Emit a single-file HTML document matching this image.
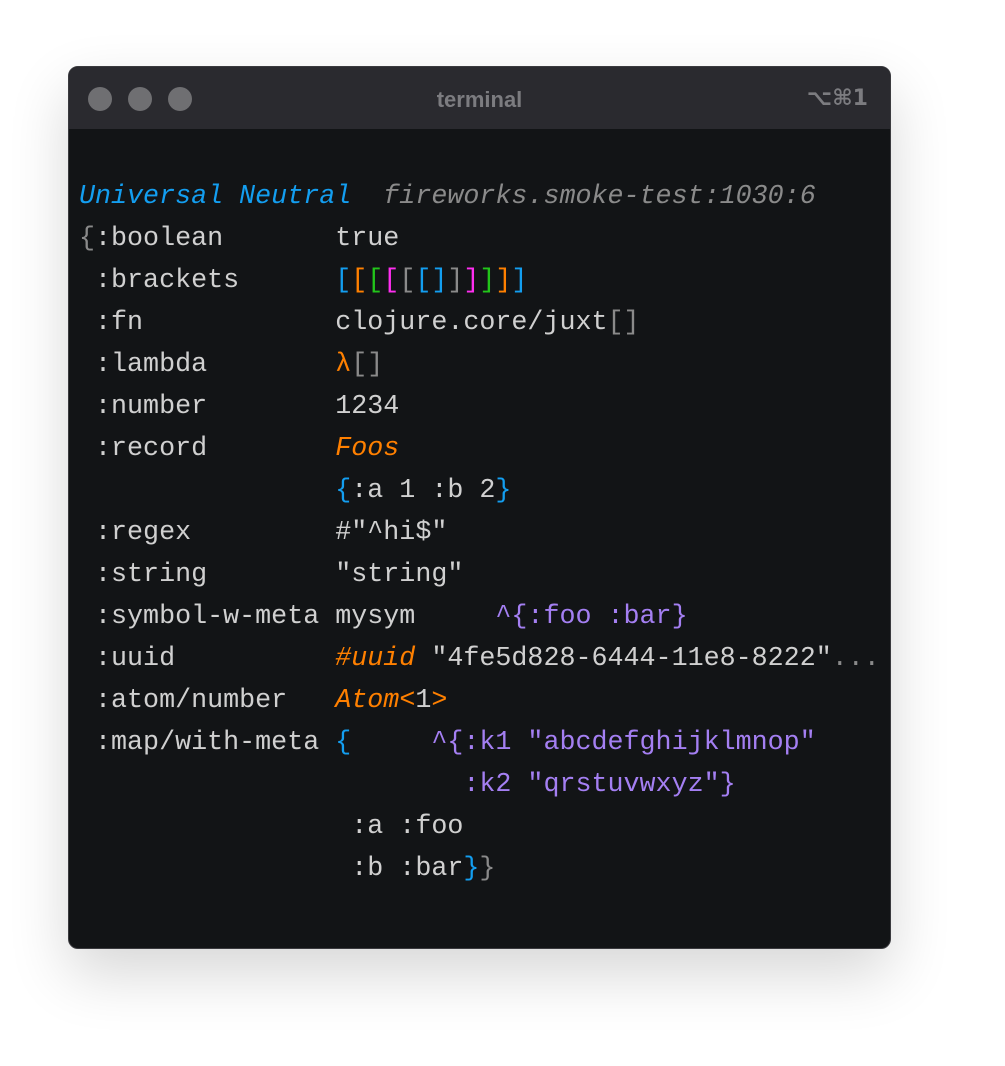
<!DOCTYPE html>
<html><head><meta charset="utf-8"><style>
html,body{margin:0;padding:0;background:#fff;width:1005px;height:1066px;overflow:hidden}
.win{position:absolute;left:68px;top:66px;width:823px;height:883px;background:#121416;border-radius:10px;overflow:hidden;box-shadow:0 25px 60px rgba(0,0,0,.16);border:1px solid #3a3a3e;box-sizing:border-box}
.bar{height:62px;background:#2a2a2f;position:relative}
.dot{position:absolute;top:20px;width:24px;height:24px;border-radius:50%;background:#6f6f72}
.title{position:absolute;left:0;right:0;top:20px;text-align:center;font:bold 22px "Liberation Sans",sans-serif;color:#7c7c80}
.sc{position:absolute;right:22px;top:19px;font:bold 22px "DejaVu Sans","Liberation Sans",sans-serif;color:#7c7c80}
pre{position:absolute;left:10px;top:109px;margin:0;font-family:"Liberation Mono","DejaVu Sans Mono",monospace;font-size:26.7px;line-height:42px;color:#d0d0d0}
.b{color:#139ef0}.o{color:#ff8000}.g{color:#22c51a}.m{color:#ff2ef0}.k{color:#8a8a8a}.p{color:#a47ff2}.gi{color:#8a8a8a;font-style:italic}.i{font-style:italic}
</style></head><body>
<div class="win">
<div class="bar"><div class="dot" style="left:19px"></div><div class="dot" style="left:59px"></div><div class="dot" style="left:99px"></div><div class="title">terminal</div><div class="sc">⌥⌘1</div></div>
<pre><span class="b i">Universal Neutral</span>  <span class="gi">fireworks.smoke-test:1030:6</span>
<span class="k">{</span>:boolean       true
 :brackets      <span class="b">[</span><span class="o">[</span><span class="g">[</span><span class="m">[</span><span class="k">[</span><span class="b">[</span><span class="b">]</span><span class="k">]</span><span class="m">]</span><span class="g">]</span><span class="o">]</span><span class="b">]</span>
 :fn            clojure.core/juxt<span class="k">[]</span>
 :lambda        <span class="o">λ</span><span class="k">[]</span>
 :number        1234
 :record        <span class="o i">Foos</span>
                <span class="b">{</span>:a 1 :b 2<span class="b">}</span>
 :regex         #"^hi$"
 :string        "string"
 :symbol-w-meta mysym     <span class="p">^{:foo :bar}</span>
 :uuid          <span class="o i">#uuid</span> "4fe5d828-6444-11e8-8222"<span class="k">...</span>
 :atom/number   <span class="o i">Atom</span><span class="o">&lt;</span>1<span class="o">&gt;</span>
 :map/with-meta <span class="b">{</span>     <span class="p">^{:k1 "abcdefghijklmnop"</span>
                        <span class="p">:k2 "qrstuvwxyz"}</span>
                 :a :foo
                 :b :bar<span class="b">}</span><span class="k">}</span></pre>
</div>
</body></html>
